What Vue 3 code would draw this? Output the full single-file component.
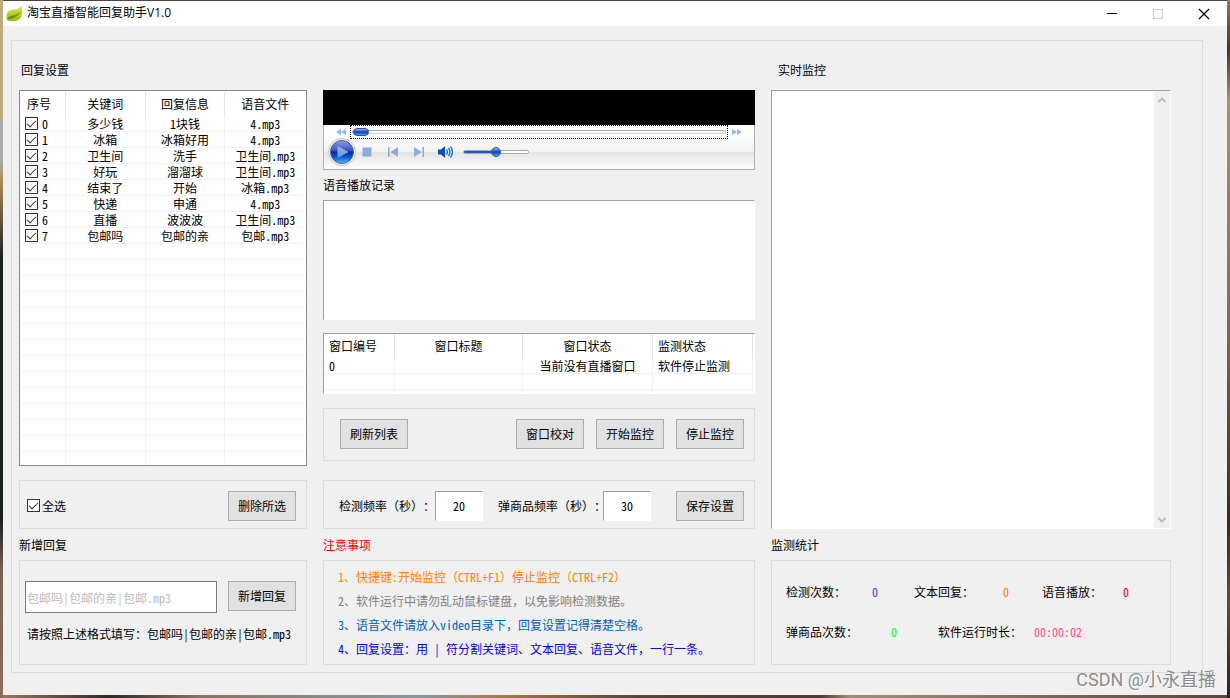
<script setup>
import { ref, computed } from 'vue'

const rules = ref([
  { key: '多少钱', reply: '1块钱', file: '4.mp3', on: true },
  { key: '冰箱', reply: '冰箱好用', file: '4.mp3', on: true },
  { key: '卫生间', reply: '洗手', file: '卫生间.mp3', on: true },
  { key: '好玩', reply: '溜溜球', file: '卫生间.mp3', on: true },
  { key: '结束了', reply: '开始', file: '冰箱.mp3', on: true },
  { key: '快递', reply: '申通', file: '4.mp3', on: true },
  { key: '直播', reply: '波波波', file: '卫生间.mp3', on: true },
  { key: '包邮吗', reply: '包邮的亲', file: '包邮.mp3', on: true },
])
const all = computed({
  get: () => rules.value.every((r) => r.on),
  set: (v) => rules.value.forEach((r) => (r.on = v)),
})
const notes = [
  { text: '1、快捷键:开始监控（CTRL+F1）停止监控（CTRL+F2）', cls: 'orange' },
  { text: '2、软件运行中请勿乱动鼠标键盘，以免影响检测数据。', cls: 'gray' },
  { text: '3、语音文件请放入video目录下，回复设置记得清楚空格。', cls: 'azure' },
  { text: '4、回复设置：用 | 符分割关键词、文本回复、语音文件，一行一条。', cls: 'blue' },
]
const checkRate = ref('20')
const goodsRate = ref('30')
const entry = ref('')
const seek = ref(0)
const volume = ref(50)
</script>

<template>
  <div class="desktop">
    <div class="window">
      <header class="titlebar">
        <svg class="leaf" width="17" height="16" viewBox="0 0 17 16">
          <defs>
            <linearGradient id="leafFill" x1="0" y1="0" x2="0" y2="1">
              <stop offset="0" stop-color="#dbe35c" />
              <stop offset=".6" stop-color="#b4cc1c" />
              <stop offset="1" stop-color="#9cbc14" />
            </linearGradient>
          </defs>
          <path d="M1.500 14.500C-.5 10 0 6.500 4 4.500C8 2.800 12.500 4 15.500 0C17 5 16.500 10 13.500 13C10.500 15.800 5 15.500 1.500 14.500Z" fill="url(#leafFill)" />
          <path d="M1 13.500C6 13 12 11 14.500 5C12 8.500 8 9.500 5 10C3 10.500 1.500 11.500 1 13.500Z" fill="#648f14" />
        </svg>
        <h1>淘宝直播智能回复助手V1.0</h1>
        <div class="winbtns">
          <button aria-label="最小化"><svg width="12" height="12" viewBox="0 0 12 12"><path d="M1 5.500H11" stroke="#000" /></svg></button>
          <button aria-label="最大化" disabled><svg width="12" height="12" viewBox="0 0 12 12"><rect x="1.500" y="1.500" width="9" height="9" fill="none" stroke="#ccc" /></svg></button>
          <button aria-label="关闭"><svg width="12" height="12" viewBox="0 0 12 12"><path d="M1 1L11 11M11 1L1 11" stroke="#000" stroke-width="1.200" /></svg></button>
        </div>
      </header>

      <main class="panel">
        <section class="col">
          <h2 class="top-title">回复设置</h2>
          <div class="rules">
            <table>
              <colgroup><col class="c-no" /><col /><col /><col /></colgroup>
              <thead>
                <tr><th class="first">序号</th><th>关键词</th><th>回复信息</th><th>语音文件</th></tr>
              </thead>
              <tbody>
                <tr v-for="(r, i) in rules" :key="i">
                  <td><label class="tick"><input v-model="r.on" type="checkbox" />{{ i }}</label></td>
                  <td>{{ r.key }}</td>
                  <td>{{ r.reply }}</td>
                  <td>{{ r.file }}</td>
                </tr>
                <tr v-for="n in 13" :key="'e' + n"><td></td><td></td><td></td><td></td></tr>
                <tr class="tail"><td></td><td></td><td></td><td></td></tr>
              </tbody>
            </table>
          </div>
          <div class="box bar select-bar">
            <label class="tick"><input v-model="all" type="checkbox" />全选</label>
            <button class="btn">删除所选</button>
          </div>
          <h2 class="label">新增回复</h2>
          <div class="box bottom add">
            <div class="add-row">
              <input v-model="entry" class="entry" type="text" aria-label="新增回复" placeholder="包邮吗|包邮的亲|包邮.mp3" />
              <button class="btn">新增回复</button>
            </div>
            <p>请按照上述格式填写：包邮吗|包邮的亲|包邮.mp3</p>
          </div>
        </section>

        <section class="col middle">
          <div class="player">
            <div class="screen"></div>
            <div class="seek-row">
              <button aria-label="快退"><svg width="10" height="6" viewBox="0 0 10 6"><path d="M5 0V6L0 3ZM10 0V6L5 3Z" fill="#8db8e8" /></svg></button>
              <div class="focus"><input v-model="seek" class="seek" type="range" aria-label="进度" /></div>
              <button aria-label="快进"><svg width="10" height="6" viewBox="0 0 10 6"><path d="M0 0V6L5 3ZM5 0V6L10 3Z" fill="#8db8e8" /></svg></button>
            </div>
            <div class="controls">
              <button aria-label="播放">
                <svg width="28" height="28" viewBox="0 0 28 28">
                  <defs>
                    <linearGradient id="orb" x1="0" y1="0" x2="0" y2="1">
                      <stop offset="0" stop-color="#8e9ee0" />
                      <stop offset=".45" stop-color="#3450c0" />
                      <stop offset=".5" stop-color="#0c22a0" />
                      <stop offset=".75" stop-color="#1060d8" />
                      <stop offset="1" stop-color="#38d0ff" />
                    </linearGradient>
                    <linearGradient id="tri" x1="0" y1="0" x2="0" y2="1">
                      <stop offset="0" stop-color="#a8b8ec" />
                      <stop offset="1" stop-color="#5c94e4" />
                    </linearGradient>
                  </defs>
                  <circle cx="14" cy="14" r="13.500" fill="#f6f6f6" stroke="#c4c4c8" />
                  <circle cx="14" cy="14" r="11.500" fill="url(#orb)" stroke="#505a94" />
                  <path d="M9.500 8L20.500 14L9.500 20Z" fill="url(#tri)" />
                </svg>
              </button>
              <button aria-label="停止"><svg width="10" height="10" viewBox="0 0 10 10"><rect x=".5" y=".5" width="9" height="9" fill="#8caade" /></svg></button>
              <button aria-label="上一个"><svg width="12" height="10" viewBox="0 0 12 10"><path d="M1 0H2.500V10H1ZM11 0V10L3.500 5Z" fill="#8caade" /></svg></button>
              <button aria-label="下一个"><svg width="12" height="10" viewBox="0 0 12 10"><path d="M9.500 0H11V10H9.500ZM1 0V10L8.500 5Z" fill="#8caade" /></svg></button>
              <button aria-label="静音">
                <svg width="16" height="12" viewBox="0 0 16 12">
                  <path d="M0 3.500H3L7 0V12L3 8.500H0Z" fill="#0a50b8" />
                  <path d="M8.500 3.500Q10.500 6 8.500 8.500M10.500 2Q13.500 6 10.500 10M12.500.7Q16.500 6 12.500 11.300" fill="none" stroke="#1868c8" stroke-width="1.300" />
                </svg>
              </button>
              <input v-model="volume" class="volume" type="range" aria-label="音量" />
            </div>
          </div>
          <h2 class="label log-label">语音播放记录</h2>
          <textarea class="log" aria-label="语音播放记录" readonly></textarea>
          <div class="windows">
            <table>
              <colgroup><col class="w1" /><col class="w2" /><col class="w3" /><col class="w4" /><col /></colgroup>
              <thead>
                <tr><th class="left">窗口编号</th><th>窗口标题</th><th>窗口状态</th><th class="left">监测状态</th><th></th></tr>
              </thead>
              <tbody>
                <tr><td class="left">0</td><td></td><td>当前没有直播窗口</td><td class="left">软件停止监测</td><td></td></tr>
                <tr><td></td><td></td><td></td><td></td><td></td></tr>
                <tr class="tail"><td></td><td></td><td></td><td></td><td></td></tr>
              </tbody>
            </table>
          </div>
          <div class="box actions">
            <button class="btn refresh">刷新列表</button>
            <button class="btn">窗口校对</button>
            <button class="btn">开始监控</button>
            <button class="btn">停止监控</button>
          </div>
          <div class="box bar rates">
            <label for="check-rate">检测频率（秒）：</label>
            <input id="check-rate" v-model="checkRate" class="num" type="text" />
            <label for="goods-rate" class="second">弹商品频率（秒）：</label>
            <input id="goods-rate" v-model="goodsRate" class="num" type="text" />
            <button class="btn">保存设置</button>
          </div>
          <h2 class="label red">注意事项</h2>
          <div class="box bottom notes">
            <p v-for="n in notes" :key="n.text" :class="n.cls">{{ n.text }}</p>
          </div>
        </section>

        <section class="col">
          <h2 class="top-title monitor-title">实时监控</h2>
          <div class="monitor">
            <textarea aria-label="实时监控" readonly></textarea>
            <div class="scroll">
              <svg width="8" height="6" viewBox="0 0 8 6"><path d="M.5 5L4 1.500L7.500 5" fill="none" stroke="#bdbdbd" stroke-width="2" /></svg>
              <svg width="8" height="6" viewBox="0 0 8 6"><path d="M.5 1L4 4.500L7.500 1" fill="none" stroke="#bdbdbd" stroke-width="2" /></svg>
            </div>
          </div>
          <h2 class="label">监测统计</h2>
          <div class="box bottom stats">
            <dl>
              <div class="s3"><dt>检测次数：</dt><dd class="violet">0</dd></div>
              <div class="s3"><dt>文本回复：</dt><dd class="orange">0</dd></div>
              <div class="s3"><dt>语音播放：</dt><dd class="red">0</dd></div>
            </dl>
            <dl>
              <div class="s2"><dt>弹商品次数：</dt><dd class="green">0</dd></div>
              <div class="time"><dt>软件运行时长：</dt><dd class="pink">00:00:02</dd></div>
            </dl>
          </div>
        </section>
      </main>
    </div>
    <div class="watermark">CSDN @小永直播</div>
  </div>
</template>

<style>
body { margin: 0; }
</style>

<style scoped>
* { box-sizing: border-box; }
.desktop {
  position: relative;
  display: flex;
  min-height: 100vh;
  padding: 1px 3px 3px;
  background:
    linear-gradient(180deg, #c0aa80 0 120px, #aaa 120px 162px, #b08a58 180px, #182024 260px 520px, #7a6054 570px, #8c6c5c) left / 3px 100% no-repeat,
    linear-gradient(180deg, #97784f 0, #4a3220 50px, #b8904c 100px, #907048 300px, #3a2a1c 520px, #6a4a28 600px, #302020) right / 3px 100% no-repeat,
    linear-gradient(90deg, #9a7a60 0, #302828 110px, #8a7460 200px, #8898a0 420px, #a87848 500px, #584438 640px, #4c3c34 820px, #a48c74 850px, #5c463c) bottom / 100% 3px no-repeat,
    #54433c;
  font: 12px/16px "Noto Sans Mono CJK SC", "Noto Sans CJK SC", sans-serif;
  text-spacing-trim: space-all;
  color: #000;
}
h1, h2, p, dl, dd { margin: 0; font-size: 12px; font-weight: 400; }
button, input, textarea { font: inherit; color: inherit; }
button { padding: 0; border: 0; background: none; }
svg { display: block; }
.window { flex: 1; display: flex; flex-direction: column; background: #f0f0f0; min-width: 0; }
.titlebar { display: flex; align-items: center; height: 25px; padding-left: 3px; background: #fff; }
h1 { margin-left: 4px; padding-bottom: 2px; font-family: "Open Sans", "Noto Sans CJK SC", sans-serif; }
.winbtns { display: flex; margin-left: auto; }
.winbtns button { display: grid; place-items: center; width: 46px; height: 25px; }
.panel {
  flex: 1;
  display: grid;
  grid-template-columns: 288fr 432fr 400fr;
  gap: 16px;
  margin: 14px 24px 22px 8px;
  padding: 0 31px 7px 7px;
  border: 1px solid #dcdcdc;
}
.col { display: flex; flex-direction: column; min-width: 0; }
.middle { padding-top: 49px; }
.top-title { margin: 21px 0 12px 2px; }
.monitor-title { margin-left: 7px; }
.label { line-height: 31px; height: 31px; }
.box { border: 1px solid #dcdcdc; }
.bar { display: flex; align-items: center; height: 49px; padding-top: 2px; }
.bottom { height: 105px; }
.btn { width: 68px; height: 30px; border: 1px solid #adadad; background: #e1e1e1; flex: none; }

table { width: 100%; table-layout: fixed; border-collapse: separate; border-spacing: 0; }
th, td { padding: 0; font-weight: 400; text-align: center; white-space: nowrap; overflow: hidden; }
th { height: 24px; border-right: 1px solid #e5e5e5; }
td { height: 16px; line-height: 15px; border-right: 1px solid #f0f0f0; border-bottom: 1px solid #f0f0f0; }
td:last-child { border-right: 0; }
.tail td { border-bottom: 0; }
.rules { flex: 1; padding: 1px 1px 0; border: 1px solid #828790; background: #fff; }
.rules .tail td { height: 13px; }
.c-no { width: 45px; }
th.first { padding-right: 8px; }
.tick { display: flex; align-items: center; gap: 4px; padding-left: 4px; }
.tick input { appearance: none; position: relative; width: 13px; height: 13px; margin: 0; border: 1px solid #333; background: #fff; flex: none; }
.tick input:checked::before {
  content: "";
  position: absolute;
  left: 3px;
  top: 1px;
  width: 8px;
  height: 4px;
  border: solid #333;
  border-width: 0 0 1px 1px;
  transform: translate(-2px, 1px) rotate(-45deg);
}
.select-bar { margin-top: 14px; padding-left: 3px; padding-right: 10px; justify-content: space-between; }
.select-bar .tick { gap: 2px; }
.add { padding: 20px 10px 0 5px; }
.add-row { display: flex; gap: 11px; }
.entry { flex: 1; min-width: 0; height: 32px; padding: 0 1px; border: 1px solid #7a7a7a; background: #fff; }
.entry::placeholder { color: #bcbcbc; opacity: 1; }
.add p { margin: 13px 0 0 2px; white-space: nowrap; }

.player { height: 80px; border: solid #b0b0b0; border-width: 0 1px 1px; background: linear-gradient(#fff 45px, #f1f1f1 62px, #e3e3e3 62px, #fdfdfd 79px); }
.screen { height: 35px; margin: 0 -1px; background: #000; }
.seek-row { display: flex; align-items: center; height: 13px; padding: 0 12px; gap: 4px; }
.focus { flex: 1; height: 14px; border: 1px dotted #000; display: flex; align-items: center; padding: 0 1px; }
.seek, .volume { appearance: none; margin: 0; background: none; }
.seek { width: 100%; height: 8px; }
.seek::-webkit-slider-runnable-track { height: 4px; border: 1px solid #aaa; border-bottom-color: #d0d0d0; border-radius: 2px; background: #fff; }
.seek::-webkit-slider-thumb { appearance: none; width: 16px; height: 8px; margin-top: -3px; border: 1px solid #3452a0; border-radius: 4px; background: linear-gradient(#9cb4ec, #1838b0 50%, #20b8f8); }
.controls { display: flex; align-items: center; height: 28px; padding-left: 4px; }
.controls button { margin-right: 14px; }
.controls button:first-child { margin-right: 6px; }
.controls button:nth-child(2) { margin-right: 15px; }
.controls button:nth-child(4) { margin-right: 13px; }
.controls button:nth-child(5) { margin-right: 9px; }
.volume { width: 66px; height: 10px; }
.volume::-webkit-slider-runnable-track { height: 4px; border: 1px solid #aaa; border-radius: 2px; background: linear-gradient(90deg, #1858e0 50%, #fff 50%); }
.volume::-webkit-slider-thumb { appearance: none; width: 10px; height: 10px; margin-top: -4px; border: 1px solid #3452a0; border-radius: 50%; background: linear-gradient(#9cb4ec, #1838b0 50%, #20b8f8); }
.log-label { height: 30px; line-height: 30px; }
.log, .windows, .monitor, .num { border: 1px solid #fff; border-top-color: #a0a0a0; border-left-color: #a0a0a0; background: #fff; }
.log { display: block; flex: 1; min-height: 120px; resize: none; border-radius: 0; outline: 0; }
.windows { margin-top: 13px; }
.windows .tail td { height: 3px; }
.w1 { width: 71px; }
.w2 { width: 128px; }
.w3 { width: 130px; }
.w4 { width: 100px; }
.left { padding-left: 5px; text-align: left; }
th:last-child { border-right: 0; }
.actions { display: flex; gap: 12px; height: 53px; margin-top: 14px; padding: 10px 10px 0 16px; }
.refresh { margin-right: auto; }
.rates { margin-top: 19px; padding-left: 15px; padding-right: 10px; white-space: nowrap; }
.num { width: 48px; height: 30px; padding: 0; text-align: center; border-radius: 0; flex: none; }
.rates .second { margin: 0 -3px 0 15px; }
.rates .btn { margin-left: auto; }
.notes { padding: 8px 0 0 14px; white-space: nowrap; }
.notes p { line-height: 16px; margin-bottom: 8px; }

.monitor { flex: 1; display: flex; }
.monitor textarea { flex: 1; min-width: 0; resize: none; border: 0; padding: 4px; outline: 0; background: #fff; }
.scroll { display: flex; flex-direction: column; justify-content: space-between; align-items: center; width: 16px; padding: 6px 0 5px; background: #f0f0f0; }
.stats { padding: 23px 0 0 14px; }
.stats dl { display: flex; margin-bottom: 24px; white-space: nowrap; }
.stats dl > div { display: flex; }
.s3 { width: 128px; }
.s3 dt { width: 86px; }
.s3:nth-child(2) dt { width: 89px; }
.s3:nth-child(3) dt { width: 81px; }
.s2 { width: 152px; }
.s2 dt { width: 105px; }
.time dt { width: 96px; }
.red { color: #f00; }
.orange { color: #ff8000; }
.gray { color: #808080; }
.azure { color: #0060c0; }
.blue { color: #0000e8; }
.violet { color: #5030e0; }
.green { color: #0f0; }
.pink { color: #ff5080; }
.watermark { position: absolute; right: 14px; bottom: 6px; font: 18px/24px Roboto, "Noto Sans CJK SC", sans-serif; color: #8c8c8c; text-shadow: 1px 1px 0 #fff; white-space: nowrap; }
</style>
